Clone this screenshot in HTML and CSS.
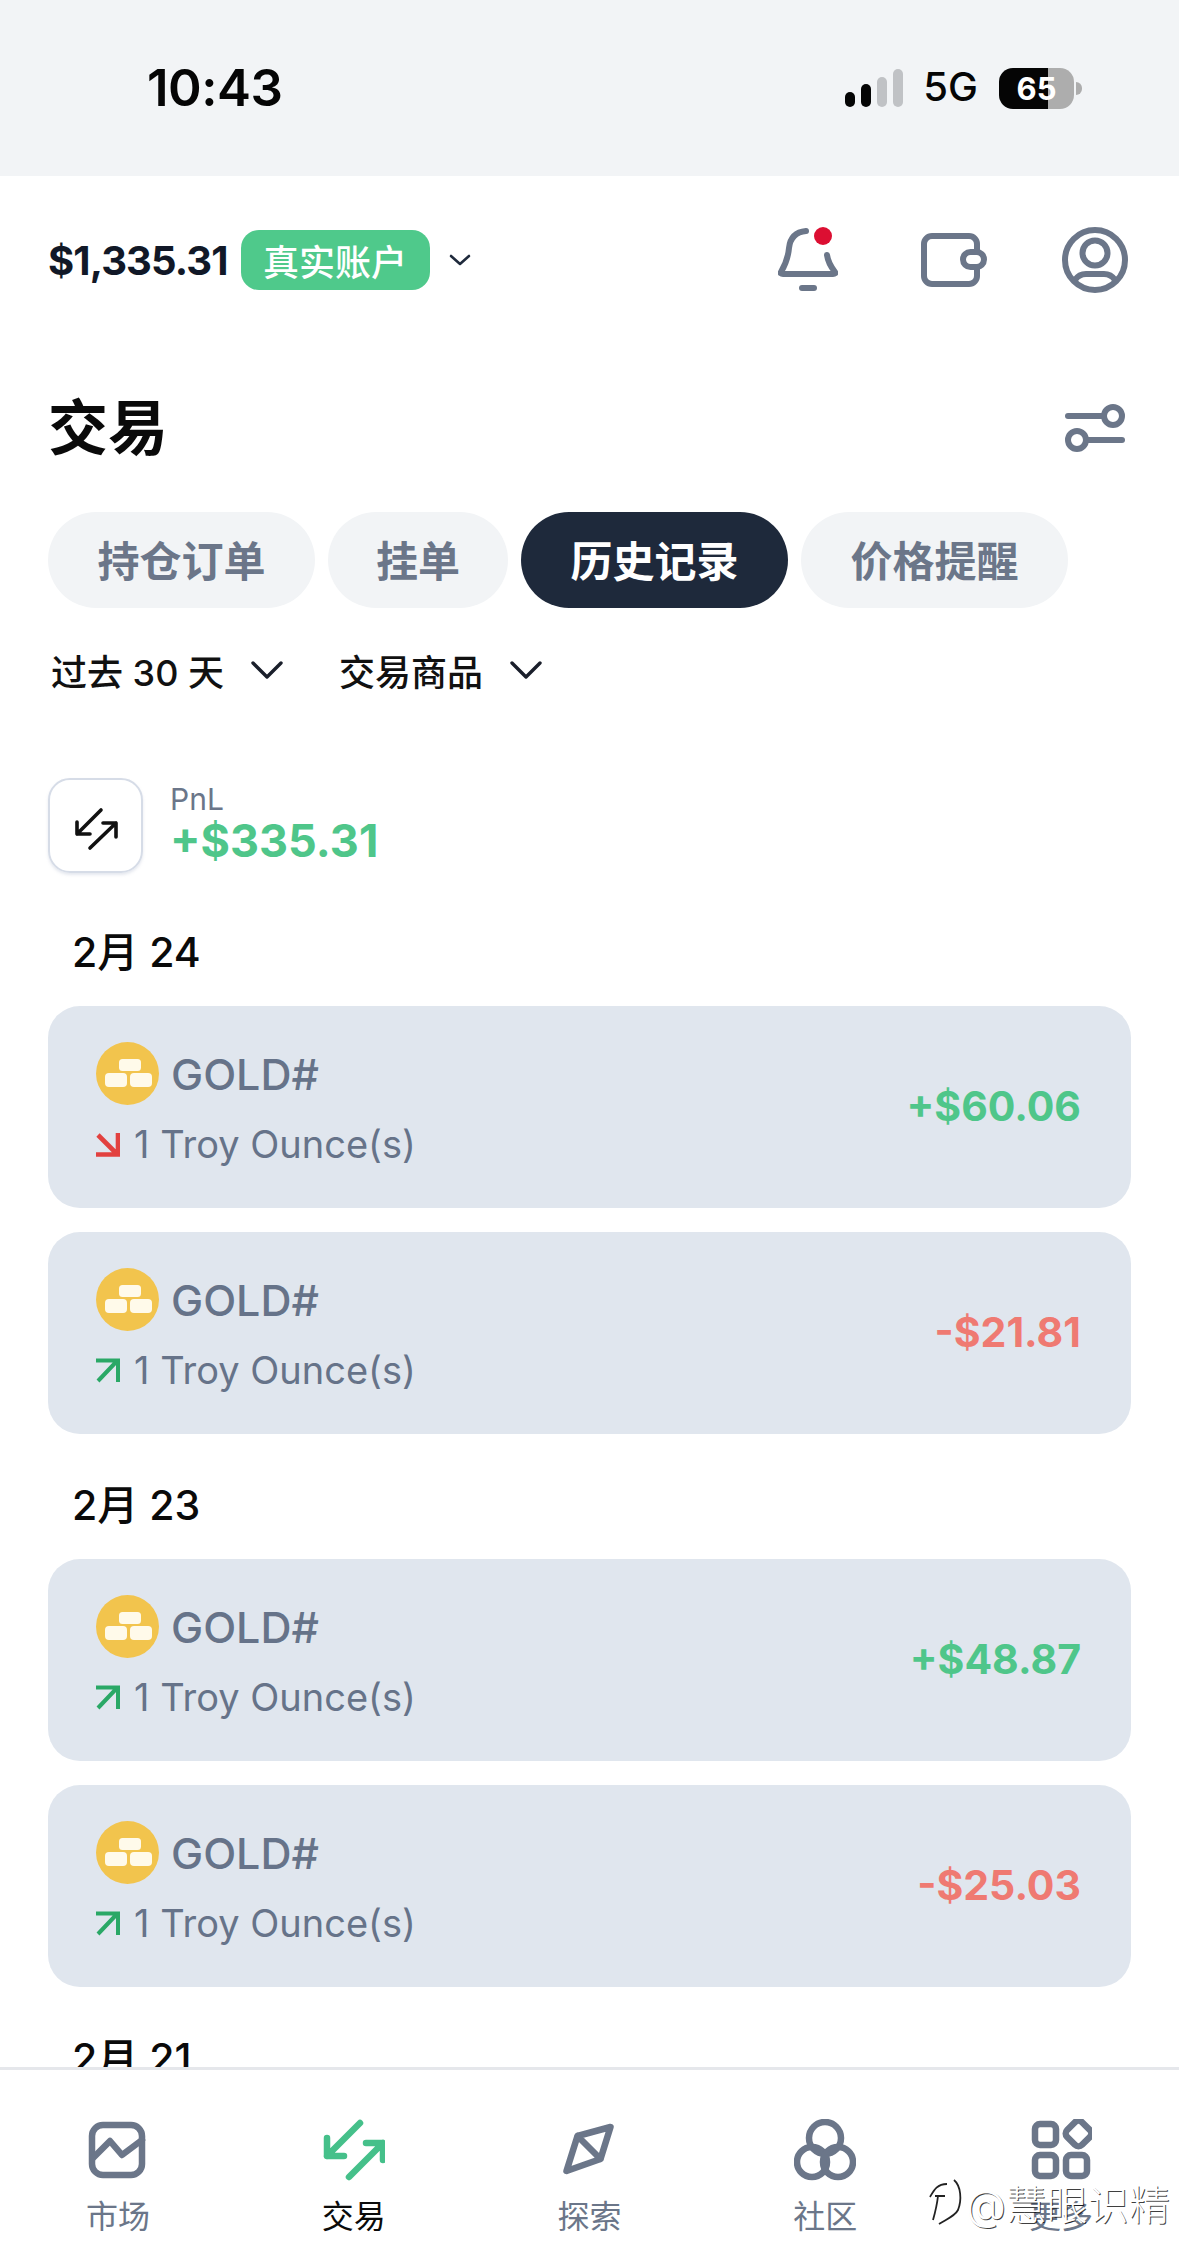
FILE: index.html
```html
<!DOCTYPE html>
<html lang="zh">
<head>
<meta charset="utf-8">
<title>交易</title>
<link rel="stylesheet" href="styles.css">
</head>
<body>
<div class="page">
  <div class="status">
    <span class="time">10:43</span>
    <div class="status-right">
      <div class="signal"><i class="bar b1"></i><i class="bar b2"></i><i class="bar b3"></i><i class="bar b4"></i></div>
      <span class="net">5G</span>
      <div class="battery"><span class="batt-num">65</span></div>
      <i class="nub"></i>
    </div>
  </div>

  <main class="main">
    <header class="top">
      <span class="balance">$1,335.31</span>
      <span class="badge">真实账户</span>
      <svg class="chev-sm" width="22" height="12" viewBox="0 0 22 12"><path d="M2 2l9 8 9-8" fill="none" stroke="#1f2a3c" stroke-width="2.6" stroke-linecap="round" stroke-linejoin="round"/></svg>
      <div class="top-icons">
        <svg class="bell" width="60" height="66" viewBox="0 0 60 66" fill="none" stroke="#6b7689" stroke-width="6" stroke-linecap="round" stroke-linejoin="round"><path d="M28 4C17 5 12 12 11 21 10 32 6 40 3 45Q2 47 5 47H55Q58 47 57 45C53 40 50 35 49 28"/><path d="M24 61H36"/><circle cx="45" cy="9" r="9" fill="#dc0f32" stroke="none"/></svg>
        <svg width="66" height="54" viewBox="0 0 66 54" fill="none" stroke="#6b7689" stroke-width="6"><rect x="3" y="3" width="53" height="48" rx="8"/><rect x="42" y="19" width="21" height="15" rx="7.5" fill="#fff"/></svg>
        <svg width="66" height="66" viewBox="0 0 66 66" fill="none" stroke="#6b7689" stroke-width="6"><circle cx="33" cy="33" r="30"/><circle cx="33" cy="26" r="12.5"/><path d="M13 53Q17 47 24 47H42Q49 47 53 53"/></svg>
      </div>
    </header>

    <div class="title-row">
      <h1 class="title">交易</h1>
      <svg width="60" height="48" viewBox="0 0 60 48" fill="none" stroke="#6b7689" stroke-width="6" stroke-linecap="round"><path d="M3 12H38"/><circle cx="48" cy="12" r="9"/><circle cx="12" cy="36" r="9"/><path d="M22 36H57"/></svg>
    </div>

    <nav class="tabs">
      <span class="tab t1">持仓订单</span>
      <span class="tab t2">挂单</span>
      <span class="tab t3 active">历史记录</span>
      <span class="tab t4">价格提醒</span>
    </nav>

    <div class="filters">
      <span class="filter">过去 30 天<svg width="32" height="20" viewBox="0 0 32 20"><path d="M2 3l14 14L30 3" fill="none" stroke="#1a1f2b" stroke-width="3.4" stroke-linecap="round" stroke-linejoin="round"/></svg></span>
      <span class="filter">交易商品<svg width="32" height="20" viewBox="0 0 32 20"><path d="M2 3l14 14L30 3" fill="none" stroke="#1a1f2b" stroke-width="3.4" stroke-linecap="round" stroke-linejoin="round"/></svg></span>
    </div>

    <section class="pnl">
      <div class="pnl-box"><svg width="90" height="90" viewBox="0 0 90 90" fill="none" stroke="#111" stroke-width="3.6" stroke-linecap="round" stroke-linejoin="round"><path d="M50 29L26 53M26 41V53H39"/><path d="M39 67L65 42M52 42H65V56"/></svg></div>
      <div class="pnl-text">
        <span class="pnl-label">PnL</span>
        <span class="pnl-value">+$335.31</span>
      </div>
    </section>

    <h2 class="date">2月 24</h2>
    <div class="cards">
      <article class="card">
        <div class="card-left">
          <div class="sym"><svg class="coin" width="63" height="63" viewBox="0 0 63 63"><circle cx="31.5" cy="31.5" r="31.5" fill="#f2c44d"/><g fill="#fffaea"><rect x="23" y="17" width="22" height="12" rx="3.5"/><rect x="9" y="31" width="22" height="14" rx="4"/><rect x="34" y="31" width="22" height="14" rx="4"/></g></svg><span class="sym-name">GOLD#</span></div>
          <div class="qty"><svg width="24" height="25" viewBox="0 0 24 25" fill="none" stroke="#e2413f" stroke-width="4.6"><path d="M2 3L21 22M22 1V22.500H0"/></svg><span>1 Troy Ounce(s)</span></div>
        </div>
        <span class="amt up">+$60.06</span>
      </article>
      <article class="card">
        <div class="card-left">
          <div class="sym"><svg class="coin" width="63" height="63" viewBox="0 0 63 63"><circle cx="31.5" cy="31.5" r="31.5" fill="#f2c44d"/><g fill="#fffaea"><rect x="23" y="17" width="22" height="12" rx="3.5"/><rect x="9" y="31" width="22" height="14" rx="4"/><rect x="34" y="31" width="22" height="14" rx="4"/></g></svg><span class="sym-name">GOLD#</span></div>
          <div class="qty"><svg width="24" height="25" viewBox="0 0 24 25" fill="none" stroke="#2aa866" stroke-width="4"><path d="M2 23L21 3M0 2.500H22V24"/></svg><span>1 Troy Ounce(s)</span></div>
        </div>
        <span class="amt down">-$21.81</span>
      </article>
    </div>

    <h2 class="date">2月 23</h2>
    <div class="cards">
      <article class="card">
        <div class="card-left">
          <div class="sym"><svg class="coin" width="63" height="63" viewBox="0 0 63 63"><circle cx="31.5" cy="31.5" r="31.5" fill="#f2c44d"/><g fill="#fffaea"><rect x="23" y="17" width="22" height="12" rx="3.5"/><rect x="9" y="31" width="22" height="14" rx="4"/><rect x="34" y="31" width="22" height="14" rx="4"/></g></svg><span class="sym-name">GOLD#</span></div>
          <div class="qty"><svg width="24" height="25" viewBox="0 0 24 25" fill="none" stroke="#2aa866" stroke-width="4"><path d="M2 23L21 3M0 2.500H22V24"/></svg><span>1 Troy Ounce(s)</span></div>
        </div>
        <span class="amt up">+$48.87</span>
      </article>
      <article class="card">
        <div class="card-left">
          <div class="sym"><svg class="coin" width="63" height="63" viewBox="0 0 63 63"><circle cx="31.5" cy="31.5" r="31.5" fill="#f2c44d"/><g fill="#fffaea"><rect x="23" y="17" width="22" height="12" rx="3.5"/><rect x="9" y="31" width="22" height="14" rx="4"/><rect x="34" y="31" width="22" height="14" rx="4"/></g></svg><span class="sym-name">GOLD#</span></div>
          <div class="qty"><svg width="24" height="25" viewBox="0 0 24 25" fill="none" stroke="#2aa866" stroke-width="4"><path d="M2 23L21 3M0 2.500H22V24"/></svg><span>1 Troy Ounce(s)</span></div>
        </div>
        <span class="amt down">-$25.03</span>
      </article>
    </div>

    <h2 class="date">2月 21</h2>
  </main>

  <footer class="nav">
    <div class="nav-item">
      <svg width="62" height="62" viewBox="1 0 62 62" fill="none" stroke="#6b7689" stroke-width="6.500" stroke-linecap="round" stroke-linejoin="round"><rect x="6" y="6" width="50" height="50" rx="11"/><path d="M7 39L24 22 36 36 56 21"/></svg>
      <span>市场</span>
    </div>
    <div class="nav-item active">
      <svg width="62" height="62" viewBox="0 0 62 62" fill="none" stroke="#45c08a" stroke-width="6.500" stroke-linecap="round" stroke-linejoin="round"><path d="M37 4L4 37M4 19V37H21"/><path d="M26 58L60 24M43 24H60V41"/></svg>
      <span>交易</span>
    </div>
    <div class="nav-item">
      <svg width="62" height="62" viewBox="1.500 0 62 62" fill="none" stroke="#6b7689" stroke-width="6.500" stroke-linecap="round" stroke-linejoin="round"><path d="M54 8L21 17 10 52 44 40ZM21 17L44 40"/></svg>
      <span>探索</span>
    </div>
    <div class="nav-item">
      <svg width="62" height="62" viewBox="0 0 62 62" fill="none" stroke="#6b7689" stroke-width="6.500"><circle cx="31" cy="19" r="16"/><circle cx="18" cy="43" r="15"/><circle cx="44" cy="43" r="15"/></svg>
      <span>社区</span>
    </div>
    <div class="nav-item">
      <svg width="62" height="62" viewBox="0 0 62 62" fill="none" stroke="#6b7689" stroke-width="6.500" stroke-linejoin="round"><rect x="5" y="5" width="21" height="21" rx="5"/><rect x="38" y="4" width="21" height="21" rx="5" transform="rotate(45 48.500 14.500)"/><rect x="5" y="36" width="21" height="21" rx="5"/><rect x="36" y="36" width="21" height="21" rx="5"/></svg>
      <span>更多</span>
    </div>
  </footer>

  <div class="watermark">
    <svg width="36" height="50" viewBox="0 0 36 50" fill="none" stroke="#222" stroke-width="1.800"><path d="M20 7C10 7 7 13 3 20M8 19H18M11 19C10 28 8 36 6 43M27 3C34 9 35 23 31 33 28 39 20 42 12 47"/></svg>
    <span class="wm-text">@慧眼识精</span>
  </div>
</div>
</body>
</html>
```

FILE: styles.css
```css
* { box-sizing: border-box; }
html, body { margin: 0; padding: 0; background: #fff; }
body {
  width: 1179px;
  height: 2260px;
  overflow: hidden;
  font-family: Inter, "Noto Sans CJK SC", sans-serif;
}
.page {
  position: relative;
  display: flex;
  flex-direction: column;
  width: 1179px;
  height: 2260px;
  overflow: hidden;
}

/* status bar */
.status {
  flex: 0 0 176px;
  display: flex;
  justify-content: space-between;
  align-items: center;
  padding: 0 97px 0 147px;
  background: #f2f4f6;
  color: #050505;
}
.time { font-size: 51px; font-weight: 600; line-height: 1; margin-top: -2px; letter-spacing: -.5px; }
.status-right { display: flex; align-items: center; }
.signal { display: flex; align-items: flex-end; gap: 6px; height: 38px; margin: 0 20px 0 0; }
.bar { display: block; width: 10px; border-radius: 5px; background: #c0c2c5; }
.b1 { height: 15px; background: #050505; }
.b2 { height: 23px; background: #050505; }
.b3 { height: 30px; }
.b4 { height: 38px; }
.net { font-size: 40px; font-weight: 500; margin: -3px 21px 0 0; line-height: 1; }
.battery {
  display: flex;
  align-items: center;
  justify-content: center;
  width: 75px;
  height: 41px;
  border-radius: 14px;
  background: linear-gradient(90deg, #050505 0, #050505 65%, #adadad 65%, #adadad 100%);
  color: #fff;
  font-size: 31px;
  font-weight: 700;
}
.nub { display: block; width: 6px; height: 13px; margin-left: 2px; border-radius: 0 6px 6px 0; background: #adadad; }

/* main */
.main { flex: 1 1 0; min-height: 0; overflow: hidden; padding: 0 48px; }
.top { display: flex; align-items: center; height: 168px; }
.balance { font-size: 40px; font-weight: 700; color: #111827; letter-spacing: -.9px; }
.badge {
  display: flex;
  align-items: center;
  justify-content: center;
  width: 189px;
  height: 60px;
  margin-left: 13px;
  border-radius: 18px;
  background: #4fc98b;
  color: #fff;
  font-size: 36px;
  font-weight: 500;
}
.chev-sm { margin-left: 19px; }
.top-icons { display: flex; align-items: center; margin-left: auto; margin-right: 3px; gap: 75px; }
.bell { margin-right: 8px; }
.title-row { display: flex; justify-content: space-between; align-items: center; height: 96px; margin-top: 36px; padding-right: 6px; }
.title { margin: 0; font-size: 60px; font-weight: 700; color: #0a0a0a; line-height: 1; }
.tabs { display: flex; gap: 13px; margin-top: 36px; }
.tab {
  display: flex;
  align-items: center;
  justify-content: center;
  height: 96px;
  padding-bottom: 4px;
  border-radius: 48px;
  background: #f2f4f6;
  color: #6b7689;
  font-size: 42px;
  font-weight: 600;
}
.t1, .t3, .t4 { width: 267px; }
.t2 { width: 180px; }
.tab.active { background: #1e293b; color: #fff; }
.filters { display: flex; align-items: center; gap: 56px; height: 64px; margin-top: 30px; padding-left: 3px; }
.filter { display: flex; align-items: center; gap: 27px; font-size: 36px; font-weight: 500; color: #111; }
.pnl { display: flex; align-items: center; gap: 27px; margin-top: 76px; }
.pnl-box {
  display: flex;
  align-items: center;
  justify-content: center;
  width: 95px;
  height: 95px;
  border: 2px solid #d6dce7;
  border-radius: 22px;
  box-shadow: 0 2px 3px rgba(150, 165, 190, .25);
}
.pnl-text { display: flex; flex-direction: column; margin-top: -6px; }
.pnl-label { font-size: 30px; line-height: 36px; color: #6b7689; }
.pnl-value { font-size: 45px; line-height: 48px; font-weight: 700; color: #4fc68a; }
.date { margin: 49px 0 24px 24px; height: 60px; font-size: 41px; line-height: 60px; font-weight: 500; color: #0a0a0a; }
.cards { display: flex; flex-direction: column; gap: 24px; }
.cards + .date { margin-top: 41px; }
.card {
  display: flex;
  justify-content: space-between;
  align-items: center;
  height: 202px;
  padding: 36px 50px 0 48px;
  border-radius: 32px;
  background: #e0e6ee;
}
.card-left { align-self: flex-start; }
.sym { display: flex; align-items: center; gap: 12px; }
.sym-name { font-size: 43px; font-weight: 500; color: #667389; }
.qty { display: flex; align-items: center; gap: 14px; margin-top: 16px; font-size: 38px; color: #667389; }
.amt { font-size: 41px; font-weight: 700; margin-top: -38px; }
.up { color: #4fc68a; }
.down { color: #ef7a72; }

/* bottom nav */
.nav {
  flex: 0 0 193px;
  display: grid;
  grid-template-columns: repeat(5, 1fr);
  padding-top: 49px;
  border-top: 3px solid #e5e7eb;
  background: #fff;
}
.nav-item { display: flex; flex-direction: column; align-items: center; gap: 14px; font-size: 32px; line-height: 44px; color: #6b7689; }
.nav-item.active { color: #0a0a0a; }

/* overlay watermark */
.watermark { position: absolute; left: 927px; top: 2172px; display: flex; align-items: center; gap: 3px; }
.wm-text { font-size: 41px; font-weight: 300; color: #fff; text-shadow: 1px 1px 0 rgba(0, 0, 0, .75); }
```
